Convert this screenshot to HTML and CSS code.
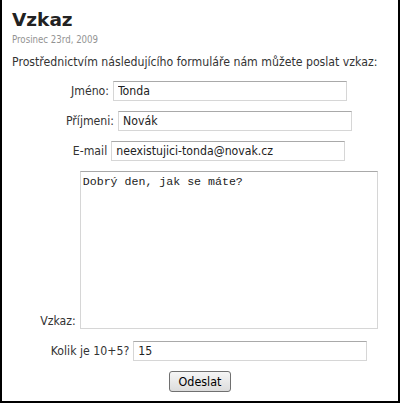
FILE: index.html
```html
<!DOCTYPE html>
<html lang="cs">
<head>
  <meta charset="UTF-8" />
  <meta name="viewport" content="width=device-width, initial-scale=1" />
  <title>Vzkaz</title>
  <link rel="stylesheet" href="styles.css">
</head>
<body>
  <div class="page">
    <h1>Vzkaz</h1>
    <div class="date">Prosinec 23rd, 2009</div>
    <p class="intro">Prostřednictvím následujícího formuláře nám můžete poslat vzkaz:</p>
    <form class="contact">
      <div class="row">
        <label for="jmeno">Jméno:</label>
        <input id="jmeno" type="text" value="Tonda">
      </div>
      <div class="row">
        <label for="prijmeni">Příjmeni:</label>
        <input id="prijmeni" type="text" value="Novák">
      </div>
      <div class="row">
        <label for="email">E-mail</label>
        <input id="email" type="text" value="neexistujici-tonda@novak.cz">
      </div>
      <div class="row row-msg">
        <label for="vzkaz">Vzkaz:</label>
        <textarea id="vzkaz">Dobrý den, jak se máte?</textarea>
      </div>
      <div class="row">
        <label for="kolik">Kolik je 10+5?</label>
        <input id="kolik" type="text" value="15">
      </div>
      <div class="actions">
        <button type="button" class="send">Odeslat</button>
      </div>
    </form>
  </div>
</body>
</html>
```
FILE: styles.css
```css
/* message form page */
body {
  margin: 0;
  background: #fff;
  font-family: "DejaVu Sans Condensed", "DejaVu Sans", sans-serif;
  color: #333;
}
.page {
  box-sizing: border-box;
  height: 403px;
  padding: 9px 10px 0 10px;
  border-left: 2px solid #000;
  border-right: 2px solid #000;
  border-bottom: 2px solid #000;
}
h1 {
  margin: 0;
  font-family: "DejaVu Sans", sans-serif;
  font-size: 18.5px;
  line-height: 22px;
  color: #222;
}
.date {
  margin-top: 3px;
  font-size: 9.6px;
  line-height: 12px;
  color: #939393;
}
.intro {
  margin: 9px 0 0 0;
  font-size: 12.2px;
  line-height: 15px;
}
.contact {
  margin-top: 11px;
}
.row {
  display: flex;
  justify-content: center;
  align-items: center;
  gap: 4px;
  padding-left: 18px;
  margin-bottom: 10px;
  font-size: 12.2px;
  line-height: 15px;
}
.row-msg {
  align-items: flex-end;
  margin-bottom: 12px;
}
input,
textarea {
  box-sizing: border-box;
  border: 1px solid #d6d6d6;
  border-top-color: #a9a9a9;
  background: #fff;
  color: #222;
  margin: 0;
}
input {
  width: 234px;
  height: 20px;
  padding: 1px 4px;
  font-family: "DejaVu Sans Condensed", "DejaVu Sans", sans-serif;
  font-size: 12.2px;
}
textarea {
  width: 298px;
  height: 158px;
  padding: 3px 2px;
  font-family: "Liberation Mono", monospace;
  font-size: 11.6px;
  line-height: 14px;
  resize: none;
}
.actions {
  text-align: center;
}
.send {
  height: 21px;
  width: 62px;
  padding: 0;
  font-family: "DejaVu Sans Condensed", "DejaVu Sans", sans-serif;
  font-size: 12.4px;
  color: #000;
  background: linear-gradient(#f6f6f6, #dcdcdc);
  border: 1px solid #707070;
  border-radius: 3px;
}
```
